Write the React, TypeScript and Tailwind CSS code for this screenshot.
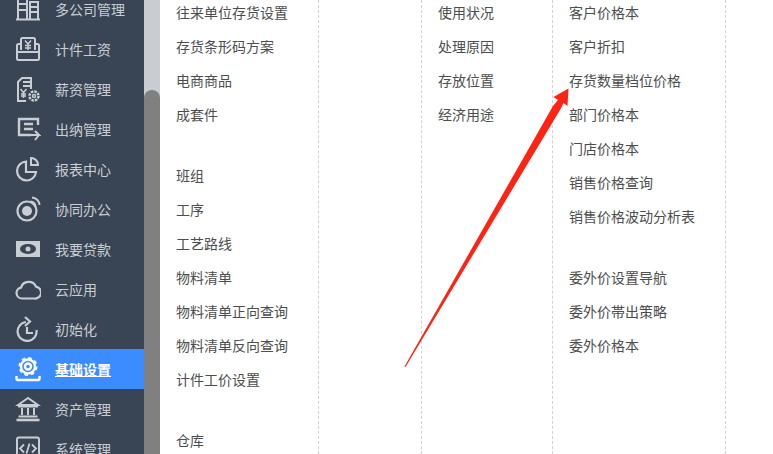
const iconProps = {
  width: 26,
  height: 26,
  viewBox: "0 0 26 26",
  fill: "none",
  stroke: "currentColor",
  strokeWidth: 2,
};

const icons: Record<string, React.ReactNode> = {
  building: (
    <svg {...iconProps}>
      <path d="M1 23.500h24M3 23V1h9v22M15 23V6h8v17M3 8h9M3 14h9M15 11h8M15 16h8" />
    </svg>
  ),
  salary: (
    <svg {...iconProps}>
      <path d="M6 14V3.500a1.500 1.500 0 0 1 1.500-1.500h11A1.500 1.500 0 0 1 20 3.500V14M6 8H3.500A1.500 1.500 0 0 0 2 9.500v13A1.500 1.500 0 0 0 3.500 24h19a1.500 1.500 0 0 0 1.500-1.500v-13A1.500 1.500 0 0 0 22.500 8H20M2 16h22" />
      <path strokeWidth={1.500} d="M10 4.500l3 3.500 3-3.500M13 8v6M10 9.500h6M10 12h6" />
    </svg>
  ),
  pay: (
    <svg {...iconProps}>
      <path d="M16 13V2H7L3 6v19h8M8 6h8M8 10h8" />
      <path strokeWidth={1.500} d="M5.500 13l3 3.500 3-3.500M8.500 16.500V22M6 18h5M6 20h5" />
      <circle cx="19" cy="20" r="4.500" strokeWidth={2.500} strokeDasharray="2.500 1" />
      <circle cx="19" cy="20" r="1.500" strokeWidth={1.500} />
    </svg>
  ),
  cashier: (
    <svg {...iconProps}>
      <path d="M23 9V3H4v16h12M9 8h9M9 13h9" strokeWidth={2.400} />
      <path d="M14 19h10l-4-4M24 19l-4 5" strokeWidth={2} />
    </svg>
  ),
  report: (
    <svg {...iconProps}>
      <path d="M11 5.500A9.500 9.500 0 1 0 21 16H11Z" strokeWidth={2.200} />
      <path d="M16 2a7 7 0 0 1 7 7h-7Z" strokeWidth={2} />
    </svg>
  ),
  collab: (
    <svg {...iconProps}>
      <circle cx="12" cy="15" r="9.500" strokeWidth={2.200} />
      <circle cx="12" cy="15" r="5" fill="currentColor" stroke="none" />
      <path d="M17 1.500a8 8 0 0 1 7.500 7.500M15.500 5.500a5 5 0 0 1 5 5" />
    </svg>
  ),
  loan: (
    <svg {...iconProps}>
      <rect x="1" y="5" width="24" height="16" fill="currentColor" stroke="none" />
      <ellipse cx="13" cy="13" rx="8" ry="5" fill="#394454" stroke="none" />
      <circle cx="13" cy="13" r="2.500" fill="currentColor" stroke="none" />
    </svg>
  ),
  cloud: (
    <svg {...iconProps}>
      <path d="M7 22.500a5.500 5.500 0 0 1-1-10.900 8 8 0 0 1 15-1A6 6 0 0 1 19.500 22.500Z" strokeWidth={2.200} />
    </svg>
  ),
  init: (
    <svg {...iconProps}>
      <path d="M11 6a9.500 9.500 0 1 0 10.500 8" strokeWidth={2.200} />
      <path d="M10 1l5 4.500-5 4.500M12 11v6h6" strokeWidth={2.200} />
    </svg>
  ),
  settings: (
    <svg {...iconProps} strokeWidth={2.400}>
      <circle cx="13" cy="10.500" r="7" />
      <circle cx="13" cy="10.500" r="8.500" strokeWidth={2} strokeDasharray="3.500 3.175" />
      <circle cx="13" cy="10.500" r="3" />
      <path d="M1.500 20v2.500a1.500 1.500 0 0 0 1.500 1.500h20a1.500 1.500 0 0 0 1.500-1.500V20" />
    </svg>
  ),
  bank: (
    <svg {...iconProps}>
      <path d="M13 2L3 9h20Z" />
      <path d="M3 10.500h20M7 12v7M13 12v7M19 12v7M3.500 20.500h19" />
      <path d="M1.500 24h23" strokeWidth={2.600} />
    </svg>
  ),
  system: (
    <svg {...iconProps}>
      <rect x="2" y="1.500" width="22" height="22" rx="2" />
      <path d="M9 8.500l-4 4 4 4M17 8.500l4 4-4 4M14.500 7.500l-3 10" strokeWidth={1.800} />
    </svg>
  ),
};

const menu = [
  { key: "building", label: "多公司管理" },
  { key: "salary", label: "计件工资" },
  { key: "pay", label: "薪资管理" },
  { key: "cashier", label: "出纳管理" },
  { key: "report", label: "报表中心" },
  { key: "collab", label: "协同办公" },
  { key: "loan", label: "我要贷款" },
  { key: "cloud", label: "云应用" },
  { key: "init", label: "初始化" },
  { key: "settings", label: "基础设置", active: true },
  { key: "bank", label: "资产管理" },
  { key: "system", label: "系统管理" },
];

const columns = [
  {
    className: "w-[159px] pl-[16px]",
    groups: [
      ["往来单位存货设置", "存货条形码方案", "电商商品", "成套件"],
      ["班组", "工序", "工艺路线", "物料清单", "物料清单正向查询", "物料清单反向查询", "计件工价设置"],
      ["仓库"],
    ],
  },
  {
    className: "w-[103px] pl-[18px]",
    groups: [[]],
  },
  {
    className: "w-[131px] pl-[16px]",
    groups: [["使用状况", "处理原因", "存放位置", "经济用途"]],
  },
  {
    className: "w-[173px] pl-[16px]",
    groups: [
      ["客户价格本", "客户折扣", "存货数量档位价格", "部门价格本", "门店价格本", "销售价格查询", "销售价格波动分析表"],
      ["委外价设置导航", "委外价帯出策略", "委外价格本"],
    ],
  },
];

export default function App() {
  return (
    <div className="relative flex h-[454px] w-[773px] overflow-hidden bg-white font-['Noto_Sans_CJK_SC',sans-serif] text-[14px]">
      <aside className="w-[144px] shrink-0 bg-[#394454]">
        <ul className="-mt-[11px]">
          {menu.map((item) => (
            <li
              key={item.key}
              className={`flex h-10 items-center gap-[14px] pl-[14px] ${
                item.active ? "bg-[#3b8cff] font-bold text-white underline" : "text-[#c9ced3]"
              }`}
            >
              <span className="flex w-[27px] shrink-0 justify-center">{icons[item.key]}</span>
              {item.label}
            </li>
          ))}
        </ul>
      </aside>

      <div className="w-4 shrink-0 bg-[#c9ccd0] pt-[90px]">
        <div className="h-full rounded-t-lg bg-[#808080]" />
      </div>

      <main className="flex flex-1 text-[#4d4d4d]">
        {columns.map((col, i) => (
          <div key={i} className={`-mt-[5px] border-r border-dashed border-[#d2d2d2] ${col.className}`}>
            {col.groups.map((group, j) => (
              <ul key={j} className="mb-[27px]">
                {group.map((label) => (
                  <li key={label} className="flex h-[34px] items-center whitespace-nowrap">
                    {label}
                  </li>
                ))}
              </ul>
            ))}
          </div>
        ))}
      </main>

      <svg className="absolute left-0 top-0" width="773" height="454" viewBox="0 0 773 454">
        <path
          d="M404.500 366.500L553 106 558 100 553.500 97 568.500 88.500 567.500 106 563.500 103 560 110 405.500 367Z"
          fill="#ff2314"
        />
      </svg>
    </div>
  );
}
